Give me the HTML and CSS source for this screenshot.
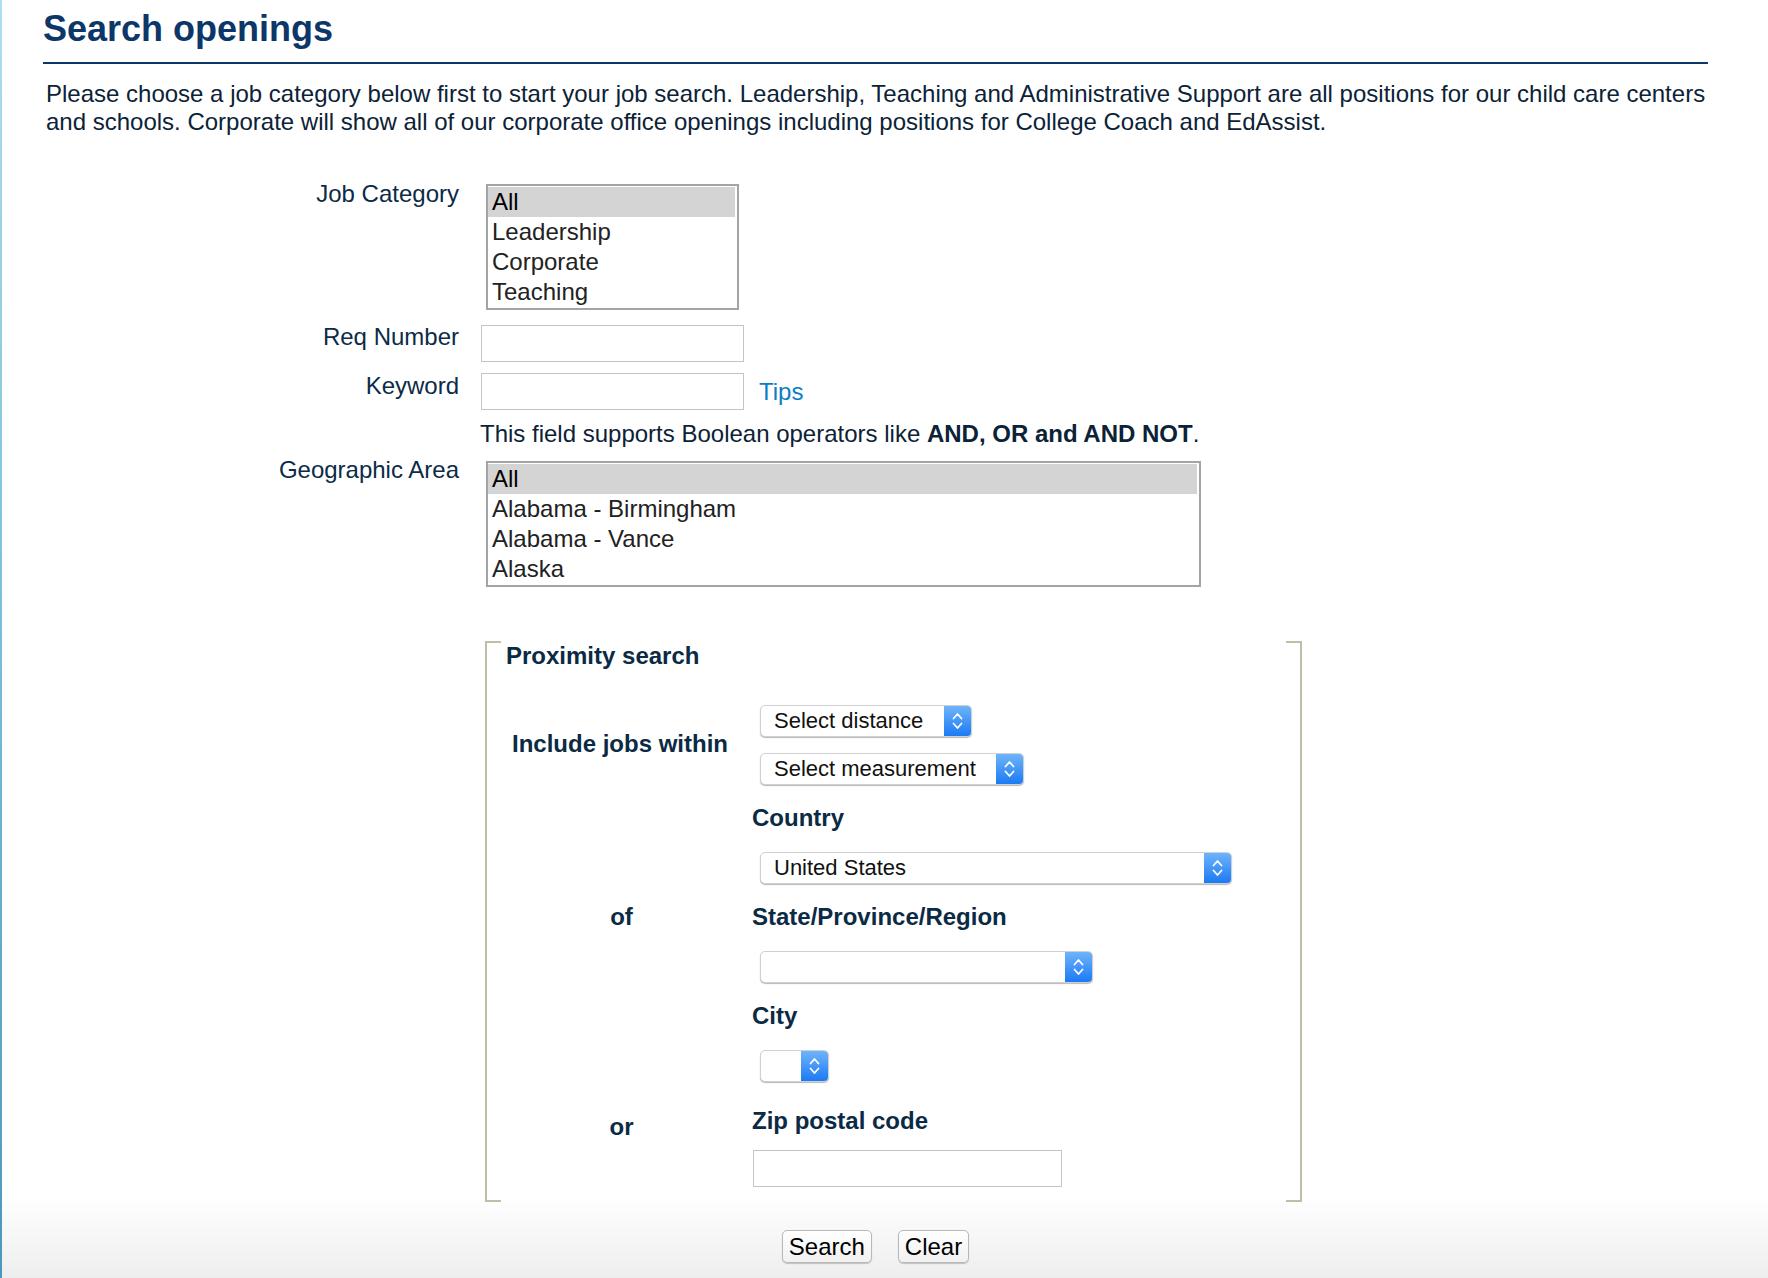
FILE: index.html
```html
<!DOCTYPE html>
<html lang="en">
<head>
<meta charset="utf-8">
<title>Search openings</title>
<link rel="stylesheet" href="styles.css">
</head>
<body>
<div class="page">
  <div class="content">
    <h1 class="title">Search openings</h1>
    <p class="intro">Please choose a job category below first to start your job search. Leadership, Teaching and Administrative Support are all positions for our child care centers and schools. Corporate will show all of our corporate office openings including positions for College Coach and EdAssist.</p>

    <div class="form">
      <div class="lbl lbl--cat">Job Category</div>
      <div class="ctl ctl--cat">
        <div class="listbox listbox--cat">
          <div class="opt opt--sel">All</div>
          <div class="opt">Leadership</div>
          <div class="opt">Corporate</div>
          <div class="opt">Teaching</div>
        </div>
      </div>

      <div class="lbl lbl--req">Req Number</div>
      <div class="ctl ctl--req"><input class="text" type="text"></div>

      <div class="lbl lbl--kw">Keyword</div>
      <div class="ctl ctl--kw"><input class="text" type="text"><a class="tips" href="#">Tips</a></div>

      <div class="lbl"></div>
      <div class="ctl ctl--hint">This field supports Boolean operators like <b>AND, OR and AND NOT</b>.</div>

      <div class="lbl lbl--geo">Geographic Area</div>
      <div class="ctl ctl--geo">
        <div class="listbox listbox--geo">
          <div class="opt opt--sel">All</div>
          <div class="opt">Alabama - Birmingham</div>
          <div class="opt">Alabama - Vance</div>
          <div class="opt">Alaska</div>
        </div>
      </div>

      <div class="lbl"></div>
      <div class="ctl ctl--prox">
        <div class="proximity">
          <div class="prox-title">Proximity search</div>
          <div class="prox-grid">
            <div class="pl pl--within">Include jobs within</div>
            <div class="pc pc--within">
              <div class="select sel--dist"><span class="sel-text">Select distance</span><span class="sel-btn"><svg width="13" height="24" viewBox="0 0 13 24"><path d="M2.5 9.5 6.5 5 10.5 9.5M2.5 14.5 6.5 19 10.5 14.5" fill="none" stroke="#fff" stroke-width="1.8" stroke-linecap="round" stroke-linejoin="round"/></svg></span></div>
              <div class="select sel--meas"><span class="sel-text">Select measurement</span><span class="sel-btn"><svg width="13" height="24" viewBox="0 0 13 24"><path d="M2.5 9.5 6.5 5 10.5 9.5M2.5 14.5 6.5 19 10.5 14.5" fill="none" stroke="#fff" stroke-width="1.8" stroke-linecap="round" stroke-linejoin="round"/></svg></span></div>
            </div>

            <div class="pl"></div>
            <div class="pc pc--lbl pc--country">Country</div>

            <div class="pl"></div>
            <div class="pc pc--sel">
              <div class="select sel--country"><span class="sel-text">United States</span><span class="sel-btn"><svg width="13" height="24" viewBox="0 0 13 24"><path d="M2.5 9.5 6.5 5 10.5 9.5M2.5 14.5 6.5 19 10.5 14.5" fill="none" stroke="#fff" stroke-width="1.8" stroke-linecap="round" stroke-linejoin="round"/></svg></span></div>
            </div>

            <div class="pl pl--of">of</div>
            <div class="pc pc--lbl">State/Province/Region</div>

            <div class="pl"></div>
            <div class="pc pc--sel">
              <div class="select sel--state"><span class="sel-text"></span><span class="sel-btn"><svg width="13" height="24" viewBox="0 0 13 24"><path d="M2.5 9.5 6.5 5 10.5 9.5M2.5 14.5 6.5 19 10.5 14.5" fill="none" stroke="#fff" stroke-width="1.8" stroke-linecap="round" stroke-linejoin="round"/></svg></span></div>
            </div>

            <div class="pl"></div>
            <div class="pc pc--lbl">City</div>

            <div class="pl"></div>
            <div class="pc pc--sel">
              <div class="select sel--city"><span class="sel-text"></span><span class="sel-btn"><svg width="13" height="24" viewBox="0 0 13 24"><path d="M2.5 9.5 6.5 5 10.5 9.5M2.5 14.5 6.5 19 10.5 14.5" fill="none" stroke="#fff" stroke-width="1.8" stroke-linecap="round" stroke-linejoin="round"/></svg></span></div>
            </div>

            <div class="pl pl--or">or</div>
            <div class="pc pc--lbl pc--zip">Zip postal code</div>

            <div class="pl"></div>
            <div class="pc pc--zipin"><input class="text text--zip" type="text"></div>
          </div>
        </div>
      </div>
    </div>

    <div class="actions">
      <button class="btn" type="button">Search</button>
      <button class="btn" type="button">Clear</button>
    </div>
  </div>
</div>
</body>
</html>
```

FILE: styles.css
```css
html, body {
  margin: 0;
  padding: 0;
  height: 1278px;
  overflow: hidden;
}

body {
  font-family: "Liberation Sans", Arial, Helvetica, sans-serif;
  color: #0c2b47;
}

.page {
  height: 1278px;
  box-sizing: border-box;
  background:
    linear-gradient(to bottom, #acdff2, #4a98bd) left top / 2px 100% no-repeat,
    linear-gradient(to bottom, #ffffff 0, #ffffff 1195px, #eeeeee 1278px);
}

.content {
  width: 1665px;
  margin-left: 43px;
  padding-top: 8px;
}

.title {
  margin: 0;
  font-size: 36px;
  line-height: 42px;
  font-weight: bold;
  color: #0c3768;
  padding-bottom: 12px;
  border-bottom: 2px solid #0c3768;
}

.intro {
  margin: 16px -10px 0 3px;
  font-size: 24px;
  line-height: 28px;
  color: #0c2236;
}

.form {
  display: grid;
  grid-template-columns: 416px 1fr;
  column-gap: 22px;
  align-items: start;
  margin-top: 44px;
}

.lbl {
  text-align: right;
  font-size: 24px;
  line-height: 28px;
  color: #0c2b47;
}

.ctl {
  font-size: 24px;
  line-height: 28px;
}

.lbl--cat { margin-top: 0; }
.ctl--cat { margin-top: 4px; }

.lbl--req { margin-top: 13px; }
.ctl--req { margin-top: 15px; }

.lbl--kw { margin-top: 10px; }
.ctl--kw {
  margin-top: 11px;
  display: flex;
  align-items: center;
}

.ctl--hint {
  margin-top: 10px;
  margin-left: -1px;
  color: #0c2236;
}

.ctl--hint b { color: #0c2236; }

.lbl--geo { margin-top: 8px; }
.ctl--geo { margin-top: 13px; }

.listbox {
  margin-left: 5px;
  border: 2px solid #a4a4a4;
  padding: 1px 2px 1px 0;
  background: #fff;
  box-sizing: border-box;
}

.listbox--cat { width: 253px; }
.listbox--geo { width: 715px; }

.opt {
  height: 30px;
  line-height: 30px;
  padding-left: 4px;
  font-size: 24px;
  color: #222;
  white-space: nowrap;
}

.opt--sel {
  background: #d4d4d4;
  color: #000;
}

.text {
  box-sizing: border-box;
  width: 263px;
  height: 37px;
  border: 1px solid #c4c4c4;
  margin: 0;
  padding: 0 6px;
  font-family: inherit;
  font-size: 22px;
  background: #fff;
  outline: none;
}

.tips {
  margin-left: 15px;
  color: #0a7dc6;
  text-decoration: none;
  font-size: 24px;
}

.ctl--prox { margin-top: 54px; }

.proximity {
  width: 817px;
  box-sizing: border-box;
  margin-left: 4px;
  border-left: 2px solid #c0bda9;
  border-right: 2px solid #c0bda9;
  padding: 1px 0 15px 19px;
  background:
    linear-gradient(#c0bda9, #c0bda9) left top / 14px 2px no-repeat,
    linear-gradient(#c0bda9, #c0bda9) right top / 14px 2px no-repeat,
    linear-gradient(#c0bda9, #c0bda9) left bottom / 14px 2px no-repeat,
    linear-gradient(#c0bda9, #c0bda9) right bottom / 14px 2px no-repeat;
}

.prox-title {
  font-size: 24px;
  line-height: 28px;
  font-weight: bold;
  color: #0b2a44;
}

.prox-grid {
  display: grid;
  grid-template-columns: 240px 1fr;
  margin-left: 6px;
  margin-top: 35px;
  align-items: start;
}

.pl {
  font-size: 24px;
  line-height: 28px;
  font-weight: bold;
  color: #0b2a44;
}

.pl--within {
  align-self: center;
  margin-bottom: 2px;
}

.pl--of {
  margin-top: 19px;
  text-align: center;
  padding-right: 21px;
}

.pl--or {
  margin-top: 31px;
  text-align: center;
  padding-right: 21px;
}

.pc {
  font-size: 24px;
  line-height: 28px;
}

.pc--lbl {
  font-weight: bold;
  color: #0b2a44;
  margin-top: 19px;
}

.pc--zip { margin-top: 25px; }

.pc--within {
  display: flex;
  flex-direction: column;
  align-items: flex-start;
  gap: 16px;
}

.pc--sel { margin-top: 20px; }

.pc--zipin {
  margin-top: 9px;
  margin-left: 1px;
}

.text--zip {
  width: 309px;
}

.select {
  display: flex;
  align-items: stretch;
  height: 32px;
  box-sizing: border-box;
  margin-left: 8px;
  border: 1px solid #d0d0d0;
  border-radius: 5px;
  background: #fff;
  box-shadow: 0 1px 1px rgba(0, 0, 0, 0.28);
  overflow: hidden;
}

.sel-text {
  flex: 1;
  padding: 0 18px 0 13px;
  font-size: 22px;
  line-height: 30px;
  color: #111;
  white-space: nowrap;
}

.sel-btn {
  width: 27px;
  flex: none;
  display: flex;
  align-items: center;
  justify-content: center;
  background: linear-gradient(to bottom, #6eb4fb, #1c7af4);
}

.sel--dist { width: 212px; }
.sel--meas { width: 264px; }
.sel--country { width: 472px; }
.sel--state { width: 333px; }
.sel--city { width: 69px; }

.actions {
  display: flex;
  justify-content: center;
  gap: 26px;
  margin-top: 28px;
}

.btn {
  height: 33px;
  padding: 0 6px;
  font-family: "Liberation Sans", Arial, sans-serif;
  font-size: 24px;
  line-height: 31px;
  color: #000;
  background: linear-gradient(to bottom, #ffffff, #f1f1f1);
  border: 1px solid #b8b8b8;
  border-radius: 5px;
  box-shadow: 0 1px 1px rgba(0, 0, 0, 0.2);
}
```
